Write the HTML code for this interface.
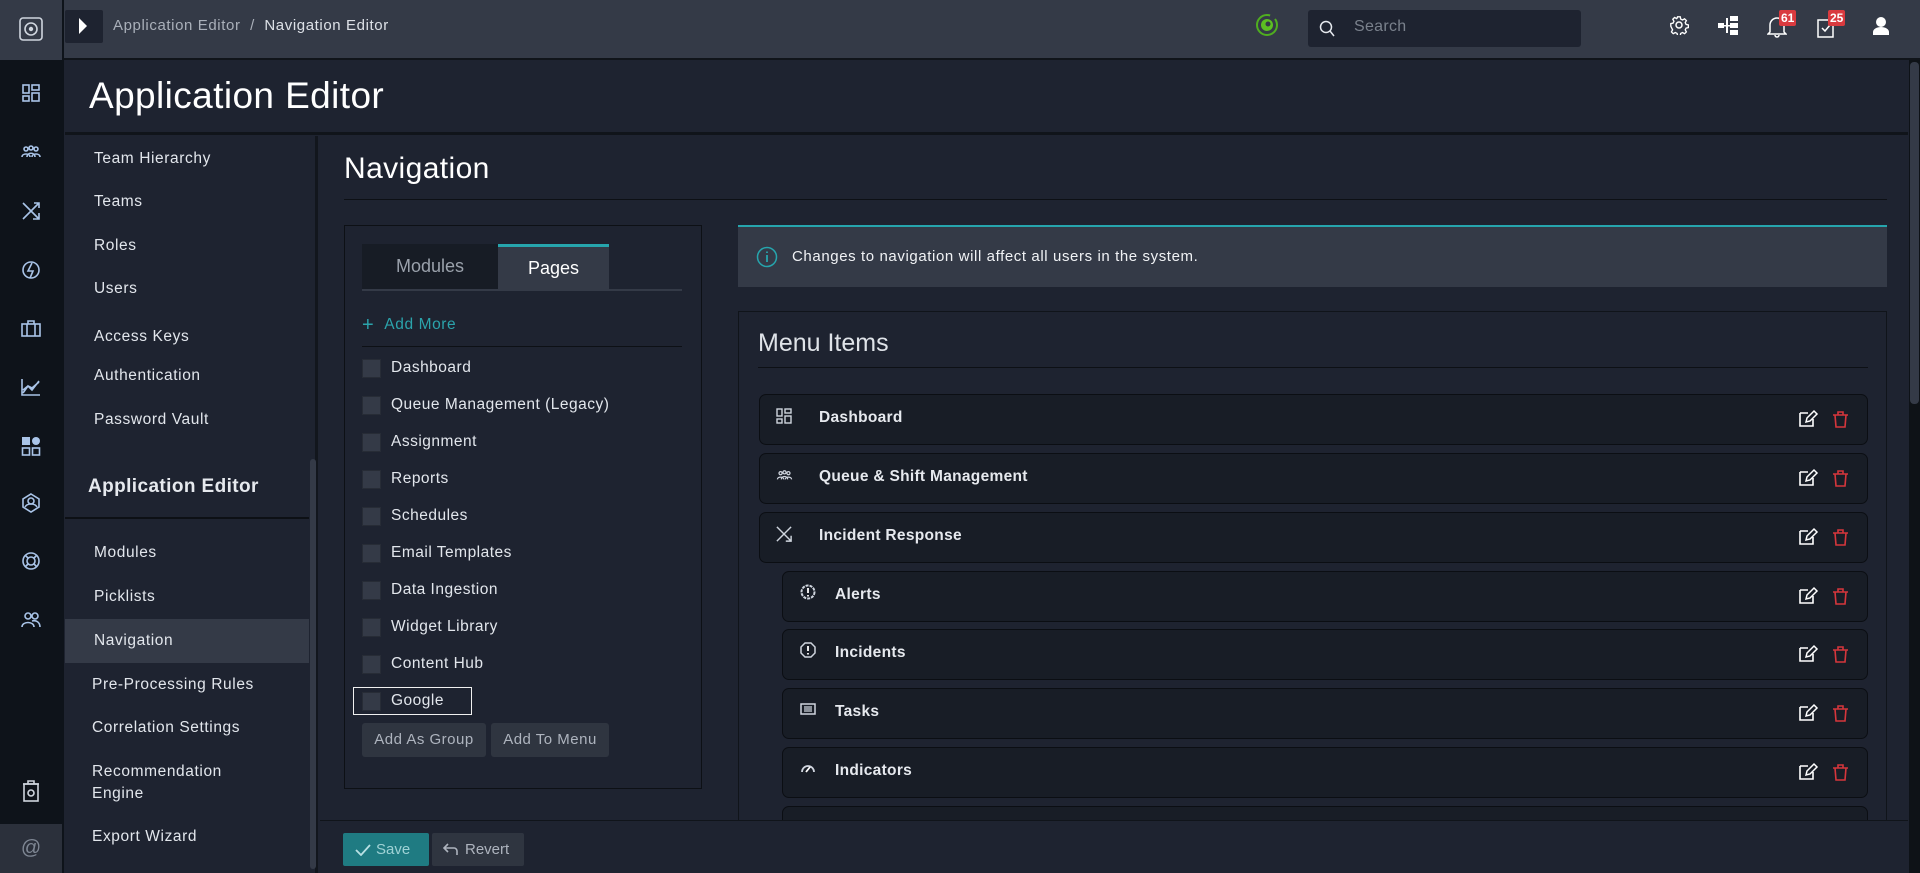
<!DOCTYPE html>
<html><head><meta charset="utf-8"><style>
*{box-sizing:border-box;margin:0;padding:0}
body{width:1920px;height:873px;overflow:hidden;background:#1e2330;font-family:"Liberation Sans",sans-serif;color:#e6e9ee;position:relative}
.a{position:absolute}
.rail{left:0;top:0;width:64px;height:873px;background:#0e131a}
.top{left:0;top:0;width:1920px;height:60px;background:#343a47;border-bottom:2px solid #10141a}
.sb{font-size:15.5px;color:#e2e6ec;letter-spacing:.6px}
.cb{width:19px;height:19px;background:#343a47;border:1px solid #272c36}
.cl{font-size:15.5px;color:#e2e6ec;letter-spacing:.5px}
.btn{background:#2f3540;border-radius:3px;color:#aeb4be;font-size:15px;letter-spacing:.5px;text-align:center;line-height:34px}
.row{background:#181d26;border:1px solid #0b0e13;border-radius:7px;height:51px}
.row .t{position:absolute;top:14px;font-size:15.5px;font-weight:bold;color:#e6e9ee;letter-spacing:.3px}
.ic{stroke:#a9c4e8;fill:none;stroke-width:1.6}
</style></head><body>
<div class="a top"></div>
<div class="a rail"></div>
<div class="a" style="left:0;top:0;width:62px;height:60px;background:#343a47"></div>
<svg class="a" style="left:18px;top:16px" width="26" height="26" viewBox="0 0 26 26"><rect x="2" y="2" width="22" height="22" rx="3" fill="none" stroke="#cfd5de" stroke-width="1.6"/><circle cx="13" cy="13" r="6" fill="none" stroke="#cfd5de" stroke-width="1.6"/><circle cx="13" cy="13" r="2.2" fill="#cfd5de"/></svg>
<div class="a" style="left:0;top:824px;width:62px;height:49px;background:#2b303b;color:#7f8794;font-size:20px;text-align:center;line-height:49px">@</div>
<svg class="a" style="left:22px;top:84px" width="18" height="18" viewBox="0 0 18 18"><g class="ic"><rect x="1" y="1" width="6" height="8"/><rect x="1" y="12" width="6" height="5"/><rect x="10" y="1" width="7" height="5"/><rect x="10" y="9" width="7" height="8"/></g></svg>
<svg class="a" style="left:21px;top:145px" width="20" height="14" viewBox="0 0 20 14"><g class="ic"><circle cx="5" cy="4" r="2"/><circle cx="10" cy="3" r="2"/><circle cx="15" cy="4" r="2"/><path d="M1 12c0-4 8-4 8 0M6 12c0-5 8-5 8 0M11 12c0-4 8-4 8 0"/></g></svg>
<svg class="a" style="left:22px;top:202px" width="18" height="18" viewBox="0 0 18 18"><g class="ic"><path d="M1 1l16 16M17 11v6h-6M1 17L17 1M12 1h5v5"/></g></svg>
<svg class="a" style="left:21px;top:260px" width="20" height="20" viewBox="0 0 20 20"><g class="ic"><circle cx="10" cy="10" r="8"/><path d="M11 3L7 11h5l-3 7" /></g></svg>
<svg class="a" style="left:21px;top:320px" width="20" height="17" viewBox="0 0 20 17"><g class="ic"><rect x="1" y="4" width="18" height="12"/><path d="M7 4V1h6v3M6 4v12M14 4v12"/></g></svg>
<svg class="a" style="left:21px;top:378px" width="20" height="18" viewBox="0 0 20 18"><g class="ic"><path d="M1 1v16h18M2 15l5-7 4 4 7-9M2 12l5-4 4 2 7-6"/></g></svg>
<svg class="a" style="left:21px;top:436px" width="20" height="20" viewBox="0 0 20 20"><rect x="1" y="1" width="8" height="8" fill="#a9c4e8"/><circle cx="15" cy="5" r="4" fill="#a9c4e8"/><g class="ic"><rect x="1.5" y="12" width="7" height="7"/><rect x="11.5" y="12" width="7" height="7"/></g></svg>
<svg class="a" style="left:21px;top:493px" width="20" height="20" viewBox="0 0 20 20"><g class="ic"><path d="M10 1l8 5v8l-8 5-8-5V6z"/><circle cx="10" cy="8" r="3"/><path d="M4 14c2-4 10-4 12 0"/></g></svg>
<svg class="a" style="left:21px;top:551px" width="20" height="20" viewBox="0 0 20 20"><g class="ic"><circle cx="10" cy="10" r="8"/><circle cx="10" cy="10" r="4"/><path d="M4 4l3 3M16 4l-3 3M4 16l3-3M16 16l-3-3"/></g></svg>
<svg class="a" style="left:21px;top:612px" width="20" height="16" viewBox="0 0 20 16"><g class="ic"><circle cx="7" cy="4" r="3"/><circle cx="14" cy="4" r="3"/><path d="M1 15c0-6 12-6 12 0M11 9c4-1 8 1 8 6"/></g></svg>
<svg class="a" style="left:22px;top:780px" width="18" height="22" viewBox="0 0 18 22"><g style="stroke:#cfd5de;fill:none;stroke-width:1.6"><rect x="2" y="4" width="14" height="17"/><path d="M6 4V1h6v3M1 4h16"/><circle cx="9" cy="13" r="3"/></g></svg>
<div class="a" style="left:65px;top:10px;width:38px;height:33px;background:#1e2330;border-radius:2px"></div>
<svg class="a" style="left:78px;top:17px" width="10" height="18"><path d="M1 1l8 8-8 8z" fill="#fff"/></svg>
<div class="a" style="left:113px;top:17px;font-size:15px;color:#aab0ba;letter-spacing:.6px">Application Editor&nbsp; /&nbsp; <span style="color:#dde1e7">Navigation Editor</span></div>
<svg class="a" style="left:1255px;top:13px" width="24" height="24" viewBox="0 0 24 24"><circle cx="12" cy="12" r="10" fill="none" stroke="#4fae1f" stroke-width="2" stroke-dasharray="50 6"/><circle cx="12" cy="12" r="6" fill="#5cbf22"/><circle cx="13" cy="11" r="2.5" fill="#343a47"/></svg>
<div class="a" style="left:1308px;top:10px;width:273px;height:37px;background:#1e2330;border-radius:3px"></div>
<svg class="a" style="left:1319px;top:20px" width="16" height="17"><circle cx="7" cy="7" r="5.5" fill="none" stroke="#e6e9ee" stroke-width="1.5"/><path d="M11 11l4 5" stroke="#e6e9ee" stroke-width="1.5"/></svg>
<div class="a" style="left:1354px;top:18px;font-size:16px;color:#7a818c;letter-spacing:.3px">Search</div>
<svg class="a" style="left:1669px;top:15px" width="20" height="20" viewBox="0 0 20 20"><g fill="none" stroke="#fff" stroke-width="1.5"><path d="M8.5 1h3l.5 2.5 2 1 2.3-1.3 2 2-1.3 2.3 1 2 2.5.5v3l-2.5.5-1 2 1.3 2.3-2 2-2.3-1.3-2 1-.5 2.5h-3l-.5-2.5-2-1-2.3 1.3-2-2 1.3-2.3-1-2L1 11.5v-3l2.5-.5 1-2L3.2 3.7l2-2L7.5 3l.5-.5z" transform="scale(.9) translate(1 1)"/><circle cx="10" cy="10" r="3"/></g></svg>
<svg class="a" style="left:1718px;top:16px" width="20" height="19" viewBox="0 0 20 19"><g fill="#fff"><rect x="0" y="7" width="6" height="5"/><rect x="12" y="0" width="8" height="5"/><rect x="12" y="7" width="8" height="5"/><rect x="12" y="14" width="8" height="5"/><rect x="8" y="2" width="2" height="15"/><rect x="6" y="9" width="6" height="1.5"/></g></svg>
<svg class="a" style="left:1767px;top:16px" width="20" height="22" viewBox="0 0 20 22"><path d="M3 16V9a7 7 0 0114 0v7l2 2H1z M8 19a2 2 0 004 0" fill="none" stroke="#fff" stroke-width="1.5"/></svg>
<div class="a" style="left:1779px;top:10px;background:#d93a3f;color:#fff;font-size:12px;font-weight:bold;padding:1px 2px;border-radius:2px">61</div>
<svg class="a" style="left:1817px;top:17px" width="18" height="21" viewBox="0 0 18 21"><g fill="none" stroke="#fff" stroke-width="1.5"><rect x="1" y="3" width="15" height="17"/><path d="M5 11l3 3 5-6"/></g></svg>
<div class="a" style="left:1828px;top:10px;background:#d93a3f;color:#fff;font-size:12px;font-weight:bold;padding:1px 2px;border-radius:2px">25</div>
<svg class="a" style="left:1872px;top:16px" width="18" height="19" viewBox="0 0 18 19"><circle cx="9" cy="6" r="5" fill="#fff"/><path d="M1 19v-3c0-3 4-5 8-5s8 2 8 5v3z" fill="#fff"/></svg>
<div class="a" style="left:65px;top:62px;width:1843px;height:73px;background:#1e2330;border-bottom:3px solid #10141a"></div>
<div class="a" style="left:89px;top:75px;font-size:37px;color:#fff;letter-spacing:.4px">Application Editor</div>
<div class="a" style="left:65px;top:136px;width:253px;height:737px;background:#1e2330;border-right:3px solid #12161d"></div>
<div class="a" style="left:310px;top:459px;width:6px;height:410px;background:#343a47;border-radius:3px"></div>
<div class="a sb" style="left:94px;top:150px">Team Hierarchy</div>
<div class="a sb" style="left:94px;top:193px">Teams</div>
<div class="a sb" style="left:94px;top:237px">Roles</div>
<div class="a sb" style="left:94px;top:280px">Users</div>
<div class="a sb" style="left:94px;top:328px">Access Keys</div>
<div class="a sb" style="left:94px;top:367px">Authentication</div>
<div class="a sb" style="left:94px;top:411px">Password Vault</div>
<div class="a" style="left:88px;top:476px;font-size:19px;font-weight:bold;color:#e6e9ee;letter-spacing:.4px">Application Editor</div>
<div class="a" style="left:65px;top:517px;width:244px;height:2px;background:#0d1015"></div>
<div class="a sb" style="left:94px;top:544px">Modules</div>
<div class="a sb" style="left:94px;top:588px">Picklists</div>
<div class="a" style="left:65px;top:619px;width:244px;height:44px;background:#343a47"></div>
<div class="a sb" style="left:94px;top:632px">Navigation</div>
<div class="a sb" style="left:92px;top:676px">Pre-Processing Rules</div>
<div class="a sb" style="left:92px;top:719px">Correlation Settings</div>
<div class="a sb" style="left:92px;top:763px">Recommendation</div>
<div class="a sb" style="left:92px;top:785px">Engine</div>
<div class="a sb" style="left:92px;top:828px">Export Wizard</div>
<div class="a" style="left:344px;top:152px;font-size:30px;color:#fff;letter-spacing:.4px">Navigation</div>
<div class="a" style="left:344px;top:199px;width:1543px;height:1px;background:#0d1015"></div>
<div class="a" style="left:344px;top:225px;width:358px;height:564px;border:1px solid #0d1015"></div>
<div class="a" style="left:362px;top:244px;width:136px;height:45px;background:#171c25;color:#9aa1ab;font-size:18px;text-align:center;line-height:44px">Modules</div>
<div class="a" style="left:498px;top:244px;width:111px;height:45px;background:#343a47;border-top:3px solid #26a5ad;color:#fff;font-size:18px;text-align:center;line-height:42px">Pages</div>
<div class="a" style="left:362px;top:289px;width:320px;height:2px;background:#343a47"></div>
<div class="a" style="left:362px;top:314px;font-size:15.5px;color:#2ba3ab;letter-spacing:.6px"><span style="font-size:20px;margin-right:10px;vertical-align:-2px">+</span>Add More</div>
<div class="a" style="left:362px;top:346px;width:320px;height:1px;background:#0d1015"></div>
<div class="a cb" style="left:362px;top:359px"></div><div class="a cl" style="left:391px;top:359px">Dashboard</div>
<div class="a cb" style="left:362px;top:396px"></div><div class="a cl" style="left:391px;top:396px">Queue Management (Legacy)</div>
<div class="a cb" style="left:362px;top:433px"></div><div class="a cl" style="left:391px;top:433px">Assignment</div>
<div class="a cb" style="left:362px;top:470px"></div><div class="a cl" style="left:391px;top:470px">Reports</div>
<div class="a cb" style="left:362px;top:507px"></div><div class="a cl" style="left:391px;top:507px">Schedules</div>
<div class="a cb" style="left:362px;top:544px"></div><div class="a cl" style="left:391px;top:544px">Email Templates</div>
<div class="a cb" style="left:362px;top:581px"></div><div class="a cl" style="left:391px;top:581px">Data Ingestion</div>
<div class="a cb" style="left:362px;top:618px"></div><div class="a cl" style="left:391px;top:618px">Widget Library</div>
<div class="a cb" style="left:362px;top:655px"></div><div class="a cl" style="left:391px;top:655px">Content Hub</div>
<div class="a" style="left:353px;top:687px;width:119px;height:28px;border:1.5px solid #f0f0f0"></div>
<div class="a cb" style="left:362px;top:692px"></div><div class="a cl" style="left:391px;top:692px">Google</div>
<div class="a btn" style="left:362px;top:723px;width:124px">Add As Group</div>
<div class="a btn" style="left:491px;top:723px;width:118px">Add To Menu</div>
<div class="a" style="left:738px;top:225px;width:1149px;height:62px;background:#343a47;border-top:2px solid #26a5ad"></div>
<svg class="a" style="left:756px;top:246px" width="22" height="22" viewBox="0 0 22 22"><circle cx="11" cy="11" r="9.5" fill="none" stroke="#26a5ad" stroke-width="1.5"/><path d="M11 9v7M11 5.5v1.5" stroke="#26a5ad" stroke-width="1.8"/></svg>
<div class="a" style="left:792px;top:248px;font-size:15px;color:#f0f2f5;letter-spacing:.6px">Changes to navigation will affect all users in the system.</div>
<div class="a" style="left:738px;top:311px;width:1149px;height:520px;border:1px solid #10141a"></div>
<div class="a" style="left:758px;top:329px;font-size:25px;color:#dfe3e8">Menu Items</div>
<div class="a" style="left:758px;top:367px;width:1110px;height:1px;background:#0d1015"></div>
<div class="a row" style="left:759px;top:394px;width:1109px"><svg class="a" style="left:16px;top:13px" width="16" height="16" viewBox="0 0 16 16"><g fill="none" stroke="#cfd5de" stroke-width="1.4"><rect x="1" y="1" width="5" height="7"/><rect x="1" y="11" width="5" height="4"/><rect x="9" y="1" width="6" height="4"/><rect x="9" y="8" width="6" height="7"/></g></svg><div class="t" style="left:59px">Dashboard</div></div>
<div class="a row" style="left:759px;top:453px;width:1109px"><svg class="a" style="left:16px;top:16px" width="17" height="11" viewBox="0 0 20 14"><g fill="none" stroke="#cfd5de" stroke-width="1.6"><circle cx="5" cy="4" r="2"/><circle cx="10" cy="3" r="2"/><circle cx="15" cy="4" r="2"/><path d="M1 12c0-4 8-4 8 0M6 12c0-5 8-5 8 0M11 12c0-4 8-4 8 0"/></g></svg><div class="t" style="left:59px">Queue &amp; Shift Management</div></div>
<div class="a row" style="left:759px;top:512px;width:1109px"><svg class="a" style="left:16px;top:13px" width="16" height="16" viewBox="0 0 18 18"><g fill="none" stroke="#cfd5de" stroke-width="1.6"><path d="M1 1l16 16M17 11v6h-6M1 17L17 1"/></g></svg><div class="t" style="left:59px">Incident Response</div></div>
<div class="a row" style="left:782px;top:571px;width:1086px"><svg class="a" style="left:17px;top:12px" width="16" height="16" viewBox="0 0 16 16"><circle cx="8" cy="8" r="6.5" fill="none" stroke="#cfd5de" stroke-width="2" stroke-dasharray="3 1"/><path d="M8 4v5M8 11v1.5" stroke="#fff" stroke-width="1.8"/></svg><div class="t" style="left:52px">Alerts</div></div>
<div class="a row" style="left:782px;top:629px;width:1086px"><svg class="a" style="left:17px;top:12px" width="16" height="16" viewBox="0 0 16 16"><path d="M5 1h6l4 4v6l-4 4H5l-4-4V5z" fill="none" stroke="#cfd5de" stroke-width="1.5"/><path d="M8 4v5M8 11v1.5" stroke="#fff" stroke-width="1.8"/></svg><div class="t" style="left:52px">Incidents</div></div>
<div class="a row" style="left:782px;top:688px;width:1086px"><svg class="a" style="left:17px;top:14px" width="16" height="12" viewBox="0 0 16 12"><rect x="1" y="1" width="14" height="10" fill="none" stroke="#cfd5de" stroke-width="1.5"/><path d="M4 4h8M4 6h8M4 8h8" stroke="#cfd5de" stroke-width="1.2"/></svg><div class="t" style="left:52px">Tasks</div></div>
<div class="a row" style="left:782px;top:747px;width:1086px"><svg class="a" style="left:17px;top:13px" width="16" height="12" viewBox="0 0 16 12"><path d="M2 11a6 6 0 0112 0" fill="none" stroke="#cfd5de" stroke-width="1.8"/><path d="M6 11l4-5" stroke="#fff" stroke-width="1.8"/></svg><div class="t" style="left:52px">Indicators</div></div>
<div class="a row" style="left:782px;top:806px;width:1086px"></div>
<div class="a" style="left:320px;top:820px;width:1588px;height:53px;background:#1e2330;border-top:1px solid #10141a"></div>
<div class="a" style="left:343px;top:833px;width:86px;height:33px;background:#1f7b82;border-radius:2px;color:#9fd2d5;font-size:15px;line-height:33px"><svg style="position:absolute;left:12px;top:10px" width="16" height="13"><path d="M1 7l5 5L15 2" fill="none" stroke="#b9e0e3" stroke-width="1.8"/></svg><span style="position:absolute;left:33px">Save</span></div>
<div class="a" style="left:432px;top:833px;width:92px;height:33px;background:#2f3540;border-radius:2px;color:#aeb4be;font-size:15px;line-height:33px"><svg style="position:absolute;left:11px;top:10px" width="16" height="13"><path d="M5 1L1 5l4 4M1 5h10a3 3 0 013 3v4" fill="none" stroke="#aeb4be" stroke-width="1.6"/></svg><span style="position:absolute;left:33px">Revert</span></div>
<div class="a" style="left:1909px;top:60px;width:11px;height:813px;background:#0e1217"></div>
<div class="a" style="left:1910px;top:62px;width:9px;height:342px;background:#343a47;border-radius:4px"></div>
<svg class="a" style="left:0;top:0" width="1920" height="873" viewBox="0 0 1920 873">
<defs><g id="ed"><path d="M1 3h8M1 3v13h13V9" fill="none" stroke="#fff" stroke-width="1.6"/><path d="M7 12l1-4 7-7 3 3-7 7z" fill="none" stroke="#fff" stroke-width="1.5"/></g>
<g id="tr"><path d="M1 4h15M6 4V1h5v3M3 4l1 12h9l1-12" fill="none" stroke="#d6363c" stroke-width="1.6"/></g></defs>
<use href="#ed" x="1799" y="410"/><use href="#tr" x="1832" y="411"/>
<use href="#ed" x="1799" y="469"/><use href="#tr" x="1832" y="470"/>
<use href="#ed" x="1799" y="528"/><use href="#tr" x="1832" y="529"/>
<use href="#ed" x="1799" y="587"/><use href="#tr" x="1832" y="588"/>
<use href="#ed" x="1799" y="645"/><use href="#tr" x="1832" y="646"/>
<use href="#ed" x="1799" y="704"/><use href="#tr" x="1832" y="705"/>
<use href="#ed" x="1799" y="763"/><use href="#tr" x="1832" y="764"/>
</svg>
</body></html>
